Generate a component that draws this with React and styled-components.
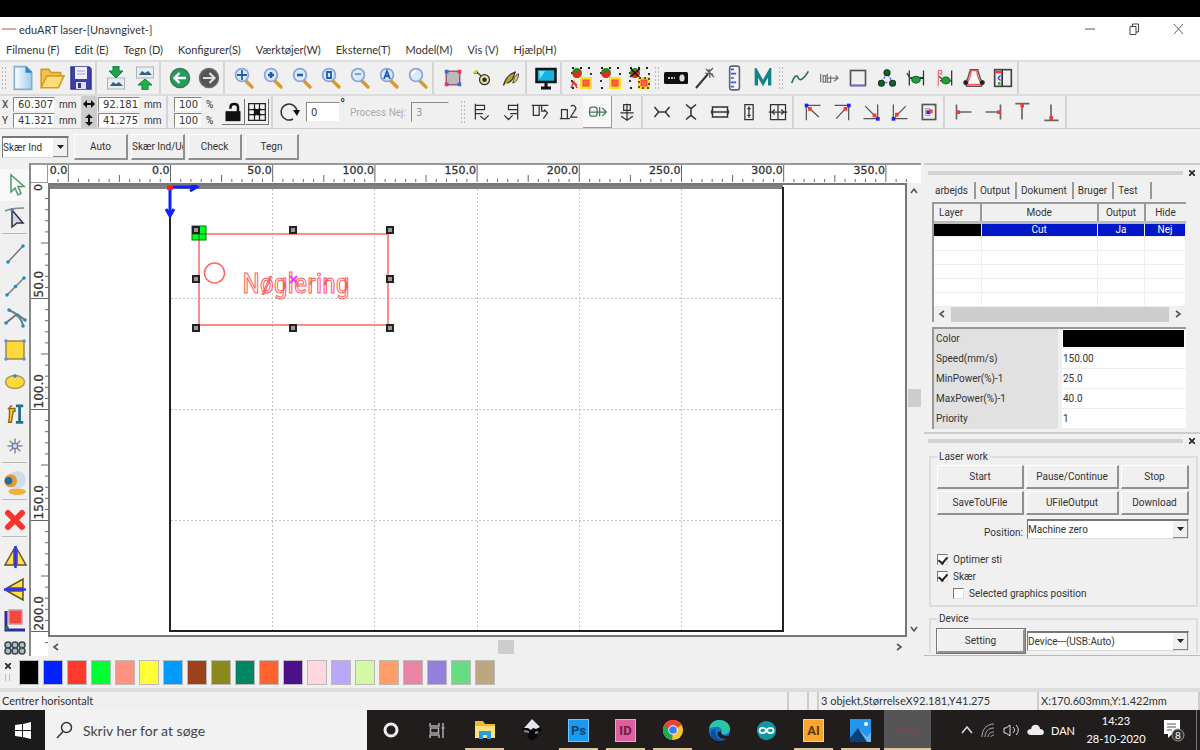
import React from 'react';
import styled, { createGlobalStyle } from 'styled-components';

const GlobalStyle = createGlobalStyle`
  * {
    box-sizing: border-box;
  }
  body {
    margin: 0;
    background: #f0f0f0;
    color: #333;
    font-family: Roboto, sans-serif;
    font-size: 10px;
    overflow: hidden;
  }
  button, input, select {
    font: inherit;
    color: inherit;
    margin: 0;
    padding: 0;
  }
  svg {
    display: block;
    flex: none;
  }
`;

const Desktop = styled.div`
  display: flex;
  flex-direction: column;
  height: 100vh;
  border-top: 17px solid #000;
`;

/* ---------- title and menu ---------- */

const TitleBar = styled.header`
  display: flex;
  align-items: center;
  height: 24px;
  flex: none;
  padding-left: 2px;
  background: #fff;
  font-family: Lato, sans-serif;
  font-size: 11px;
`;

const Logo = styled.span`
  width: 14px;
  height: 2px;
  margin-right: 3px;
  background: #e2a3a6;
`;

const WindowButtons = styled.div`
  display: flex;
  margin-left: auto;
`;

const WindowButton = styled.button`
  display: flex;
  align-items: center;
  justify-content: center;
  width: 44px;
  height: 22px;
  border: 0;
  background: none;
`;

const MenuBar = styled.nav`
  display: flex;
  align-items: center;
  gap: 15px;
  height: 19px;
  flex: none;
  padding: 0 0 2px 6px;
  background: #fff;
  font-family: Lato, sans-serif;
  font-size: 11px;
`;

const MenuLink = styled.a`
  color: #333;
  text-decoration: none;
`;

/* ---------- toolbars ---------- */

const Toolbar = styled.div`
  display: flex;
  flex: none;
  height: 34px;
  border-top: 2px solid #dcdcdc;
`;

const Grip = styled.span`
  width: 8px;
  margin: 4px 0;
  flex: none;
  background: radial-gradient(circle, #bbb 1px, transparent 1px) 0 0 / 4px 4px;
  background-clip: content-box;
  padding: 0 2px;
`;

const Divider = styled.span`
  width: 6px;
  flex: none;
  border-left: 2px solid #d4d4d4;
`;

const ToolButton = styled.button`
  display: flex;
  align-items: center;
  justify-content: center;
  width: 29px;
  flex: none;
  border: 0;
  background: ${props => (props.$raised ? '#f8f8f8' : 'none')};
  box-shadow: ${props => (props.$raised ? 'inset -1px -1px #999' : 'none')};
`;

const FieldGrid = styled.div`
  display: grid;
  grid-template-columns: ${props => props.$columns};
  grid-auto-rows: 16px;
  align-items: center;
  padding-left: 2px;
`;

const NumberField = styled.input`
  width: 100%;
  min-width: 0;
  height: ${props => props.$height || 15}px;
  padding-left: 4px;
  border: 1px solid #888;
  border-right-color: #eee;
  border-bottom-color: #eee;
  background: ${props => (props.disabled ? '#f0f0f0' : '#fff')};
  color: ${props => (props.disabled ? '#999' : '#333')};
  font-family: "DejaVu Sans", sans-serif;
  font-size: 10px;
`;

const Unit = styled.span`
  padding-left: 4px;
`;

const AxisBox = styled.span`
  display: flex;
  align-items: center;
  justify-content: center;
  align-self: stretch;
  margin: 0 1px 0 2px;
  background: #ccc;
`;

const LockButtons = styled.div`
  display: flex;
  align-items: center;
  gap: 1px;
  padding-right: 2px;
`;

const LockButton = styled.button`
  display: flex;
  align-items: center;
  justify-content: center;
  width: 23px;
  height: 26px;
  border: 0;
  border-right: 1px solid #777;
  border-bottom: 1px solid #777;
  background: #f0f0f0;
`;

const RotateGroup = styled.div`
  display: flex;
  align-items: center;
  padding-right: 10px;
  width: 182px;
`;

const RotateBox = styled.span`
  width: 34px;
  margin-left: 5px;
`;

const Degree = styled.span`
  width: 10px;
  align-self: flex-start;
  font-size: 14px;
`;

const ProcessLabel = styled.label`
  flex: 1;
  white-space: nowrap;
  color: #aaa;
`;

const ProcessBox = styled.span`
  width: 38px;
  margin-left: 4px;
`;

const ModeBar = styled.div`
  display: flex;
  align-items: center;
  gap: 3px;
  height: 35px;
  flex: none;
  padding: 2px 2px 0;
  border-top: 1px solid #ccc;
`;

const PushButton = styled.button`
  height: ${props => props.$height || 24}px;
  width: ${props => props.$width || 'auto'};
  overflow: hidden;
  white-space: nowrap;
  border: solid #fff;
  border-width: 1px 2px 2px 1px;
  border-right-color: #909090;
  border-bottom-color: #909090;
  background: #f0f0f0;
  outline: ${props => (props.$focused ? '1px solid #777' : 'none')};
`;

const SelectBox = styled.div`
  display: flex;
  width: ${props => props.$width || '100%'};
  height: ${props => props.$height || 20}px;
  margin-right: ${props => props.$right || 0}px;
  border: 1px solid #777;
  border-top-width: 2px;
  border-right-color: #ddd;
  border-bottom-color: #ddd;
  background: #fff;
`;

const SelectInput = styled.select`
  flex: 1;
  min-width: 0;
  appearance: none;
  border: 0;
  background: #fff;
`;

const SelectArrow = styled.span`
  display: flex;
  align-items: center;
  justify-content: center;
  width: 15px;
  border-right: 1px solid #888;
  border-bottom: 1px solid #888;
  background: #f0f0f0;
`;

/* ---------- work area ---------- */

const Main = styled.main`
  display: grid;
  grid-template-columns: 31px minmax(0, 1fr) 276px;
  flex: 1;
  min-height: 0;
`;

const SideTools = styled.div`
  display: flex;
  flex-direction: column;
  min-height: 0;
  overflow: hidden;
  padding-top: 6px;
  border-right: 2px solid #888;
`;

const SideButton = styled.button`
  display: flex;
  align-items: center;
  justify-content: center;
  height: 32px;
  flex: none;
  border: 0;
  background: ${props => (props.$active ? '#f8f8f8' : 'none')};
`;

const SideDivider = styled.span`
  height: 5px;
  flex: none;
  margin: 0 2px;
  border-top: 1px solid #bbb;
`;

const Stage = styled.section`
  display: grid;
  grid-template-columns: 17px minmax(0, 1fr) 14px;
  grid-template-rows: 18px minmax(0, 1fr) 19px;
  margin-right: 3px;
  border-top: 2px solid #999;
  background: #fff;
`;

const RulerTop = styled.svg`
  grid-column: 2 / 4;
  width: 100%;
  height: 18px;
`;

const RulerLeft = styled.svg`
  grid-column: 1;
  grid-row: 2 / 4;
  width: 17px;
  height: 100%;
`;

const RulerText = styled.text`
  font-family: "DejaVu Sans", sans-serif;
  font-size: ${props => props.$size}px;
  fill: #333;
  stroke: #333;
  stroke-width: 0.3;
`;

const Canvas = styled.div`
  min-height: 0;
  border: 2px solid #777;
  overflow: hidden;
`;

const CanvasDrawing = styled.svg`
  width: 100%;
  height: 100%;
`;

const KeyText = styled.text`
  font-family: "Roboto Condensed", Lato, sans-serif;
  font-size: 28px;
  fill: none;
  stroke: #ff5c5c;
`;

const Corner = styled.span`
  border-right: 1px solid #999;
  border-bottom: 1px solid #999;
`;

const ScrollTrack = styled.div`
  display: flex;
  flex-direction: ${props => (props.$vertical ? 'column' : 'row')};
  align-items: center;
  padding: ${props => (props.$vertical ? '4px 0' : '0 4px')};
  background: #f0f0f0;
`;

const ScrollSpace = styled.span`
  flex: ${props => props.$grow};
`;

const ScrollThumb = styled.span`
  width: ${props => props.$w};
  height: ${props => props.$h};
  flex: ${props => (props.$fill ? 1 : 'none')};
  margin: 0 ${props => (props.$fill ? 5 : 0)}px;
  background: #cdcdcd;
`;

/* ---------- right dock ---------- */

const Dock = styled.aside`
  display: flex;
  flex-direction: column;
  min-height: 0;
`;

const Panel = styled.section`
  flex: ${props => props.$flex};
  display: flex;
  flex-direction: column;
  min-height: 0;
  overflow: hidden;
  border-top: 2px solid #ccc;
  border-bottom: ${props => (props.$last ? '1px solid #bbb' : '0')};
`;

const PanelGrip = styled.div`
  display: flex;
  align-items: center;
  gap: 3px;
  height: 15px;
  flex: none;
  margin-bottom: ${props => props.$bottom || 0}px;
  padding: 0 2px 0 4px;
  &:before {
    content: '';
    flex: 1;
    height: 4px;
    background: #d3d3d3;
  }
`;

const CloseButton = styled.button`
  width: 12px;
  height: 12px;
  border: 0;
  background: none;
  display: flex;
  align-items: center;
  justify-content: center;
`;

const Tabs = styled.div`
  display: flex;
  align-items: center;
  height: 22px;
  padding: 2px 0 3px 8px;
`;

const Tab = styled.button`
  height: 17px;
  padding: 0 5px 0 3px;
  border: 0;
  border-right: 2px solid #999;
  background: none;
  ${props => props.$active && 'align-self: flex-start; padding-right: 6px;'}
  ${props => props.$last && 'padding-right: 13px;'}
  & + & {
    padding-left: 4px;
  }
`;

const ListFrame = styled.div`
  margin: 0 14px 5px 8px;
  border-top: 2px solid #999;
  border-left: 2px solid #999;
  background: #fff;
`;

const LayerTable = styled.table`
  width: 100%;
  table-layout: fixed;
  border-collapse: collapse;
  th {
    height: 18px;
    padding: 0;
    font-weight: 400;
    background: #f0f0f0;
    border-right: 2px solid #999;
    border-bottom: 3px solid #bbb;
  }
  td {
    height: 14px;
    padding: 0;
    text-align: center;
    border-right: 1px solid #eee;
    border-bottom: 1px solid #eee;
  }
  th:last-child {
    border-right: 0;
  }
  th:first-child {
    text-align: left;
    padding-left: 5px;
  }
`;

const LayerRow = styled.tr`
  line-height: 12px;
  color: ${props => (props.$selected ? '#fff' : '#333')};
  background: ${props => (props.$selected ? '#0018c8' : '#fff')};
  td:first-child {
    background: ${props => (props.$selected ? '#000' : '#fff')};
  }
`;

const PropertyTable = styled.table`
  width: 100%;
  border-collapse: collapse;
  th {
    width: 126px;
    height: 20px;
    padding: 0 0 0 2px;
    text-align: left;
    font-weight: 400;
    background: #e1e1e1;
    border-right: 4px solid #f0f0f0;
  }
  td {
    padding: 0 0 0 1px;
    border-bottom: 1px solid #eee;
    background: #fff;
  }
`;

const ColorBar = styled.span`
  display: block;
  height: 17px;
  margin-right: 2px;
  background: #000;
`;

const Group = styled.fieldset`
  margin: 0 2px 6px 5px;
  padding: 0 7px 0 6px;
  min-width: 0;
  border: 2px solid #ddd;
  ${props => props.$open && 'border-bottom: 0;'}
`;

const Legend = styled.legend`
  padding: 0 2px;
  line-height: 12px;
`;

const ButtonGrid = styled.div`
  display: grid;
  grid-template-columns: 87px 93px minmax(0, 1fr);
  gap: 2px;
  padding-top: 2px;
`;

const FormRow = styled.div`
  display: grid;
  grid-template-columns: 88px minmax(0, 1fr);
  gap: 2px;
  padding-top: 4px;
  align-items: center;
`;

const FormLabel = styled.label`
  text-align: right;
  padding: 8px 2px 0 0;
`;

const CheckList = styled.div`
  padding: 12px 0 3px;
`;

const CheckLabel = styled.label`
  display: flex;
  align-items: center;
  gap: 5px;
  height: 17px;
  margin-left: ${props => (props.$indent ? 16 : 0)}px;
`;

const CheckBox = styled.input`
  appearance: none;
  width: 11px;
  height: 11px;
  border: 1px solid #777;
  border-right-color: #ddd;
  border-bottom-color: #ddd;
  background: #fff;
  display: flex;
  justify-content: center;
  &:checked:after {
    content: '';
    width: 4px;
    height: 7px;
    border: solid #222;
    border-width: 0 2px 2px 0;
    transform: rotate(40deg);
  }
`;

/* ---------- palette, status, taskbar ---------- */

const Palette = styled.div`
  display: flex;
  align-items: center;
  gap: 4px;
  height: 33px;
  flex: none;
  border-bottom: 1px solid #ddd;
`;

const PaletteHandle = styled.div`
  width: 15px;
  display: flex;
  flex-direction: column;
  align-items: center;
  gap: 5px;
`;

const Swatch = styled.button`
  width: 20px;
  height: 25px;
  border: 1px solid #bbb;
  background: ${props => props.$color};
`;

const StatusBar = styled.footer`
  display: flex;
  height: 21px;
  flex: none;
  border-top: 3px solid #ddd;
  font-family: Lato, sans-serif;
  font-size: 11px;
  line-height: 17px;
`;

const StatusPane = styled.span`
  flex: ${props => (props.$width ? 'none' : 1)};
  width: ${props => props.$width || 'auto'};
  padding-left: 2px;
  white-space: nowrap;
  border-right: 2px solid #ccc;
`;

const Taskbar = styled.div`
  display: flex;
  height: 40px;
  flex: none;
  background: #211d1d;
  color: #fff;
`;

const StartButton = styled.button`
  display: flex;
  align-items: center;
  justify-content: center;
  width: 45px;
  border: 0;
  background: #1b1b1b;
`;

const Search = styled.label`
  display: flex;
  align-items: center;
  gap: 10px;
  width: 322px;
  padding-left: 11px;
  background: #f2f2f2;
  color: #444;
`;

const SearchInput = styled.input`
  flex: 1;
  min-width: 0;
  border: 0;
  background: none;
  font-family: Lato, sans-serif;
  font-size: 14px;
  &::placeholder {
    color: #444;
    opacity: 1;
  }
`;

const TaskButton = styled.button`
  display: flex;
  align-items: center;
  justify-content: center;
  width: 47px;
  flex: none;
  border: 0;
  background: ${props => (props.$active ? '#555' : 'none')};
  position: relative;
  &:after {
    content: '';
    position: absolute;
    bottom: 0;
    left: ${props => (props.$active ? 0 : 4)}px;
    right: ${props => (props.$active ? 0 : 4)}px;
    height: 2px;
    background: ${props => (props.$running ? '#dcc6a2' : 'transparent')};
  }
`;

const AppTile = styled.span`
  width: 21px;
  height: 23px;
  line-height: 21px;
  text-align: center;
  font-size: 13px;
  font-weight: 700;
  border: 1px solid ${props => props.$edge};
  background: ${props => props.$color};
  color: ${props => props.$ink};
`;

const Tray = styled.div`
  display: flex;
  align-items: center;
  gap: 7px;
  margin-left: auto;
  padding-right: 3px;
  font-family: Lato, sans-serif;
  font-size: 11px;
`;

const Clock = styled.time`
  width: 64px;
  margin: 0 8px 0 2px;
  text-align: center;
  white-space: nowrap;
  line-height: 18px;
`;

const ShowDesktop = styled.span`
  align-self: stretch;
  margin-left: 4px;
  border-left: 1px solid #777;
`;

/* ---------- icons ---------- */

const Svg = ({ size = 24, children }) => (
  <svg width={size} height={size} viewBox="0 0 24 24" fill="none" stroke="#333" strokeWidth="1.5">
    {children}
  </svg>
);

const Lens = ({ children }) => (
  <Svg>
    <path d="M14 15l6 6" stroke="#d99a2b" strokeWidth="3.4" strokeLinecap="round" />
    <circle cx="10" cy="9" r="6.4" fill="#dce9fb" stroke="#8da6da" strokeWidth="1.8" />
    <g stroke="#1d5fb4" strokeWidth="1.8">{children}</g>
  </Svg>
);

const Picture = ({ y }) => (
  <g>
    <rect x="3.500" y={y} width="17" height="11" fill="#e6eef2" stroke="#a9b4b8" strokeWidth="1" />
    <path d={`M6 ${y + 8}l3-4 3 2 3-2 4 4z`} fill="#345f80" stroke="none" />
  </g>
);

const Node = ({ x, y, color = '#1b8fc4' }) => (
  <circle cx={x} cy={y} r="1.8" fill={color} stroke="none" />
);

const Flower = ({ kind }) => (
  <Svg size={24}>
    <path d="M3 2h19v20H3z" stroke="#222" strokeWidth="1.8" strokeDasharray="2 6" />
    <circle cx="8" cy="7" r="5" fill="#2b8a22" stroke="none" />
    <circle cx="8" cy="8" r="4" fill="#e8281c" stroke="none" />
    <circle cx="7" cy="5" r="2" fill="#2b8a22" stroke="none" />
    {kind === 0 && <path d="M2 22l3-6 3 6M3 16l5 3" stroke="#e8281c" />}
    {kind === 2 && <path d="M3 11l10-8M4 3l9 9" stroke="#111" />}
    <rect x="11" y="11" width="12" height="12" fill="#ffe21c" stroke="none" />
    <rect x="14" y="14" width="6" height="6" fill="#ff6a2a" stroke="#f33a6a" strokeWidth="1" />
    {kind === 2 && <path d="M12 12h10v10H12z" stroke="#222" strokeDasharray="2 3" />}
  </Svg>
);

const Cross = () => (
  <svg width="6" height="6" viewBox="0 0 6 6" stroke="#222" strokeWidth="1.6">
    <path d="M0 0l6 6M6 0l-6 6" />
  </svg>
);

const Chevron = ({ turn = 0 }) => (
  <svg width="8" height="8" viewBox="0 0 8 8" fill="none" stroke="#555" strokeWidth="1.6">
    <path d="M1 6l3-4 3 4" transform={`rotate(${turn} 4 4)`} />
  </svg>
);

const DownArrow = () => (
  <svg width="7" height="4" viewBox="0 0 7 4">
    <path d="M0 0h7l-3.500 4z" fill="#222" />
  </svg>
);

const fileIcons = [
  ['New', <Svg size={26}><defs><linearGradient id="sheet"><stop offset="0" stopColor="#fff" /><stop offset="1" stopColor="#9dcdf0" /></linearGradient></defs><path d="M4 1.500h11l5 5v16H4z" fill="url(#sheet)" stroke="#86aecd" /><path d="M15 1.500v5h5" fill="#2d86c6" stroke="#2d86c6" /></Svg>],
  ['Open', <Svg size={26}><path d="M2 21V4h7l2 3h9v4" fill="#f5c24c" stroke="#d79a25" /><path d="M2 21L7 10h16l-5 11z" fill="#ffdc7a" stroke="#d79a25" /></Svg>],
  ['Save', <Svg size={24}><path d="M2 1h18l2 2v20H2z" fill="#3e40aa" stroke="#33358f" /><rect x="6" y="1" width="12" height="12" fill="#eef" stroke="none" /><path d="M8 5h8M8 8h8" stroke="#b9bad8" /><rect x="7" y="16" width="10" height="7" fill="#dfe0f2" stroke="none" /><rect x="9" y="17" width="3" height="5" fill="#33358f" stroke="none" /></Svg>],
];

const transferIcons = [
  ['Import', <Svg size={24}><Picture y={12} /><path d="M9 0h6v5h4l-7 7-7-7h4z" fill="#22a04c" stroke="#13803a" strokeWidth="1" /></Svg>],
  ['Export', <Svg size={24}><Picture y={1} /><path d="M9 24h6v-5h4l-7-6-7 6h4z" fill="#22b04c" stroke="#13803a" strokeWidth="1" /></Svg>],
];

const historyIcons = [
  ['Undo', <Svg><circle cx="12" cy="12" r="9.500" fill="#1fa05a" stroke="#45725a" /><path d="M18 12H7M11.500 7l-5 5 5 5" stroke="#fff" strokeWidth="2.4" /></Svg>],
  ['Redo', <Svg><circle cx="12" cy="12" r="9.500" fill="#555" stroke="#6b6b6b" /><path d="M6 12h11M12.500 7l5 5-5 5" stroke="#ddd" strokeWidth="2.2" /></Svg>],
];

const zoomIcons = [
  ['Pan', <Lens><path d="M10 4v10M5 9h10" /></Lens>],
  ['Zoom in', <Lens><path d="M10 6v6M7 9h6" strokeWidth="2.600" /></Lens>],
  ['Zoom out', <Lens><path d="M7 9h6" strokeWidth="2.600" /></Lens>],
  ['Zoom page', <Lens><path d="M8 6h4v6H8z" /></Lens>],
  ['Zoom data', <Lens><path d="M7 8h6" strokeWidth="1" /></Lens>],
  ['Zoom all', <Lens><path d="M7 13l3-8 3 8M8 10h4" /></Lens>],
  ['Zoom box', <Lens><path d="M6 9a4 4 0 0 1 4-4" stroke="#fff" /></Lens>],
];

const editIcons = [
  ['Bounds', <Svg size={18}><rect x="3" y="3" width="18" height="18" fill="#bbb" stroke="#9a5a7a" strokeWidth="2" /><path d="M1 1h5v5H1zM18 18h5v5h-5z" fill="#46d" stroke="none" /><path d="M18 1h5v5h-5zM1 18h5v5H1z" fill="#e35" stroke="none" /></Svg>],
  ['Cut start', <Svg size={20}><path d="M2 6h5l6 5M7 6l-2-3" /><circle cx="15" cy="14" r="6" fill="#e8e0a0" /><circle cx="15" cy="14" r="2" fill="#222" /><path d="M2 5h4" stroke="#e8d400" strokeWidth="3" /></Svg>],
  ['Cut order', <Svg size={20}><path d="M3 21c2-9 6-13 14-16-2 7-4 12-10 13" fill="#b6a822" /><path d="M14 18c5-1 7-6 7-11-3 1-5 4-7 11z" fill="#d8cf62" strokeWidth="1" /></Svg>],
];

const previewIcons = [
  ['Preview', <Svg size={24}><rect x="2.500" y="3" width="19" height="13" fill="#16b4dc" stroke="#111" strokeWidth="2.500" /><path d="M7 22h10M12 17v4" stroke="#111" strokeWidth="3" /><path d="M5 5l6 0-5 8z" fill="#7fe0f4" stroke="none" /></Svg>],
];

const flowerIcons = [
  ['Select all', <Flower kind={0} />],
  ['Group', <Flower kind={1} />],
  ['Ungroup', <Flower kind={2} />],
];

const deviceIcons = [
  ['Rotary', <Svg size={24}><rect x="0" y="6" width="24" height="12" rx="1.500" fill="#111" stroke="none" /><ellipse cx="18" cy="12" rx="2.600" ry="3.600" fill="#ddd" stroke="none" /><path d="M4 12h7" stroke="#fff" strokeDasharray="2 1" /></Svg>],
  ['Wand', <Svg><path d="M3 22L15 8" stroke="#333" strokeWidth="2" /><path d="M12 7l8 1M16 3l1 9M13 3l8 8M20 2l-4 4" stroke="#555" strokeWidth="1.200" /></Svg>],
  ['Ruler', <Svg size={26}><rect x="8" y="1" width="9" height="22" rx="2" fill="#f4f4ff" stroke="#666" /><path d="M9 4h3M9 8h5M9 12h3M9 16h5M9 20h3" stroke="#4654e8" /></Svg>],
  ['Model', <Svg size={20}><path d="M4 21V4l8 14 8-14v17" stroke="#138387" strokeWidth="4" /></Svg>],
];

const pathIcons = [
  ['Smooth curve', <Svg size={20}><path d="M2 18c4-10 6-10 8-6s6 2 12-8" stroke="#276b6b" strokeWidth="2" /></Svg>],
  ['Bitmap', <Svg size={20}><path d="M2 7v10M5 9h3v8H5zM10 7v10h4V9M10 12h12M20 9l3 3-5 4" stroke="#777" /></Svg>],
  ['Frame', <Svg size={20}><rect x="3" y="3" width="18" height="18" stroke="#555" strokeWidth="2" /><path d="M3 21h18" stroke="#66f" strokeWidth="2" /></Svg>],
  ['Nodes', <Svg size={18}><path d="M12 6L4 18h16z" stroke="#66f" strokeDasharray="3 2" strokeWidth="2" /><g fill="#12652a" stroke="#103a1c"><circle cx="12" cy="5" r="4" /><circle cx="4.500" cy="19" r="4" /><circle cx="19.500" cy="19" r="4" /></g></Svg>],
  ['Distance', <Svg size={20}><path d="M4 3v18M21 3v18M1 6l3 5" /><path d="M5 12h16" strokeWidth="2.500" /><ellipse cx="12" cy="14" rx="5" ry="4" fill="#2a9b36" stroke="#173" /></Svg>],
  ['Align cut', <Svg size={20}><path d="M4 2v20M4 3h4v4H4" stroke="#e77" /><path d="M20 3v18M5 10l4 4M6 15h14" /><ellipse cx="13" cy="15" rx="5" ry="4" fill="#1fa12c" stroke="#173" /></Svg>],
  ['Offset', <Svg size={22}><path d="M8 3h8l3 10 3 4-2 4H4l-2-4 3-4z" stroke="#555" /><path d="M9 4h6l1 6 4 9H4l4-9z" fill="#fff" stroke="#f55" /><circle cx="3" cy="17" r="2" fill="#111" /><circle cx="21" cy="17" r="2" fill="#111" /></Svg>],
  ['Properties', <Svg size={20}><rect x="2" y="2" width="20" height="20" stroke="#444" strokeWidth="2" /><path d="M11 2v20" strokeWidth="2" /><path d="M3 5h8" stroke="#f33" strokeWidth="3" /><path d="M6 12l3-3M6 12l3 3" stroke="#33f" /><path d="M6 17h3v3H6z" fill="#1b1" stroke="none" /></Svg>],
];

const arrangeIcons = [
  ['Align left', <Svg size={20}><path d="M4 2v19M4 4h11v5H4M4 14h9M10 17l5 4 5-5" /></Svg>],
  ['Align right', <Svg size={20}><path d="M20 2v19M20 4H9v5h11M20 14h-9M4 16l5 5 5-5" /></Svg>],
  ['Align top', <Svg size={20}><path d="M2 4h20M4 4v12h7V4M14 4v7h4M17 9l4 4-5 7" /></Svg>],
  ['Align bottom', <Svg size={20}><path d="M1 20h12M3 20V9h7v11M14 5c4-3 8 2 5 5l-5 8h8" /></Svg>],
  ['Centrer horisontalt', <Svg size={20}><g stroke="#3d7a55"><rect x="2" y="6" width="9" height="11" rx="3" /><path d="M1 12h21M14 6v11M17 7l5 5-5 5" /></g></Svg>],
  ['Center vertical', <Svg size={20}><path d="M12 2v20M8 3h8v7H8zM4 13h16M5 17l7 5 7-5" /></Svg>],
];

const spacingIcons = [
  ['Same gap across', <Svg size={20}><path d="M3 6l5 6-5 6M21 6l-5 6 5 6M8 12h8" strokeWidth="1.800" /></Svg>],
  ['Same gap down', <Svg size={20}><path d="M6 3l6 5 6-5M6 21l6-5 6 5M12 8v8" strokeWidth="1.800" /></Svg>],
  ['Same width', <Svg size={20}><path d="M3 6h18v12H3zM3 12h18M2 10v4M22 10v4" strokeWidth="1.800" /></Svg>],
  ['Same height', <Svg size={20}><path d="M7 3h10v18H7zM12 5v14M10 8h4M10 16h4" /></Svg>],
  ['Same size', <Svg size={20}><path d="M3 3h18v18H3zM1 12h22M12 3v18" /><path d="M8 9l-3 3 3 3M16 9l3 3-3 3" /></Svg>],
];

const Spot = ({ x, y, color }) => <rect x={x - 2} y={y - 2} width="4.400" height="4.400" fill={color} stroke="none" />;

const moveIcons = [
  ['Top left', <Svg size={20}><path d="M4 22V4h17M7 7l12 11" stroke="#555" /><Spot x={4} y={4} color="#22f" /><Spot x={8} y={8} color="#f33" /></Svg>],
  ['Top right', <Svg size={20}><path d="M3 4h17v18M17 7L5 20" stroke="#555" /><Spot x={20} y={4} color="#22f" /><Spot x={16} y={8} color="#f33" /></Svg>],
  ['Bottom right', <Svg size={20}><path d="M20 3v17H3M5 5l13 13" stroke="#555" /><Spot x={20} y={20} color="#22f" /><Spot x={16} y={16} color="#f33" /></Svg>],
  ['Bottom left', <Svg size={20}><path d="M4 3v17h17M19 5L6 18" stroke="#555" /><Spot x={4} y={20} color="#22f" /><Spot x={8} y={15} color="#f33" /></Svg>],
  ['Page center', <Svg size={20}><rect x="4" y="3" width="16" height="18" stroke="#555" strokeWidth="2" /><path d="M8 8h5v8H8zM16 3l4 4" stroke="#888" strokeWidth="1" /><Spot x={11} y={12} color="#22f" /><Spot x={14} y={11} color="#f33" /></Svg>],
];

const edgeIcons = [
  ['Left edge', <Svg size={20}><path d="M3 3v18M3 12h18" stroke="#666" strokeWidth="2" /><Spot x={5} y={12} color="#f33" /></Svg>],
  ['Right edge', <Svg size={20}><path d="M21 3v18M3 12h18" stroke="#666" strokeWidth="2" /><Spot x={19} y={12} color="#f33" /></Svg>],
  ['Top edge', <Svg size={20}><path d="M4 2h17M12 2v19" stroke="#666" strokeWidth="2" /><Spot x={12} y={4} color="#f33" /></Svg>],
  ['Bottom edge', <Svg size={20}><path d="M4 22h17M12 3v19" stroke="#666" strokeWidth="2" /><Spot x={12} y={19} color="#f33" /></Svg>],
];

const sideIcons = [
  [
    ['Select', <Svg><path d="M8 2v17l4-4 3 7 3-1.500-3-7h6z" fill="#fff" stroke="#4c9a68" /></Svg>],
    ['Edit nodes', <Svg><path d="M2 6c6-3 12-3 19-3" stroke="#888" /><path d="M9 5v17l5-4h6z" fill="#cdd6ee" stroke="#333" /><Node x={9} y={5} color="#4a7fd0" /></Svg>],
  ],
  [
    ['Line', <Svg><path d="M5 20L20 4" stroke="#777" /><Node x={5} y={20} /><Node x={20} y={4} /></Svg>],
    ['Polyline', <Svg><path d="M4 21L21 4" stroke="#777" /><Node x={4} y={21} /><Node x={12.5} y={12.5} /><Node x={21} y={4} /></Svg>],
    ['Curve', <Svg><path d="M3 17L14 8M6 4c7 3 12 7 14 15M14 8l8 6" stroke="#777" strokeWidth="2" /><Node x={3} y={17} /><Node x={6} y={4} /><Node x={14} y={9} /><Node x={22} y={14} /><Node x={20} y={20} /></Svg>],
    ['Rectangle', <Svg><rect x="3" y="3" width="18" height="18" fill="#ffd93b" stroke="#9a8a4a" /><Node x={3} y={3} color="#5b8fe0" /><Node x={21} y={3} color="#5b8fe0" /><Node x={3} y={21} color="#5b8fe0" /><Node x={21} y={21} color="#5b8fe0" /></Svg>],
    ['Ellipse', <Svg><ellipse cx="12" cy="12" rx="9.500" ry="6.500" fill="#ffd93b" stroke="#b39a55" /><Node x={12} y={6} /></Svg>],
    ['Text', <Svg size={22}><path d="M9 3c-4 0-3 4-3 8s0 6-1 10h3l2-12h2V6H4" fill="#ffc933" stroke="#8a6a1a" /><path d="M13 3h8M13 21h8M17 3v18" stroke="#1f6f92" strokeWidth="3" /></Svg>],
    ['Point', <Svg size={18}><path d="M12 2v20M2 12h20M5 5l14 14M19 5L5 19" stroke="#888" strokeWidth="2" /><circle cx="12" cy="12" r="3.500" fill="#d5e3ff" stroke="#5a7bc0" /></Svg>],
  ],
  [
    ['Capture', <Svg size={26}><circle cx="14" cy="9" r="8" fill="#cfdde8" stroke="none" /><ellipse cx="14" cy="20" rx="8" ry="3" fill="#f0b040" stroke="none" /><circle cx="8" cy="10" r="6" fill="#e8963a" stroke="none" /><circle cx="6" cy="10" r="3.500" fill="#1d6fa5" stroke="none" /></Svg>],
  ],
  [
    ['Delete', <Svg><path d="M5 5l14 14M19 5L5 19" stroke="#f5352b" strokeWidth="6" strokeLinecap="round" /></Svg>],
  ],
  [
    ['Mirror horizontal', <Svg><path d="M11 4v16H2zM14 4v16h9z" fill="#ffe04a" stroke="#5f561c" /><path d="M12.500 1v22" stroke="#2b2bff" strokeWidth="2.500" /></Svg>],
    ['Mirror vertical', <Svg><path d="M20 11H4l16-9zM20 14H4l16 9z" fill="#ffe04a" stroke="#5f561c" /><path d="M1 12.500h22" stroke="#2b2bff" strokeWidth="2.500" /></Svg>],
    ['Place', <Svg><rect x="6" y="1" width="13" height="14" fill="#f5483c" stroke="#c9a" /><path d="M3 2v19h19" stroke="#332a9a" strokeWidth="3" /><circle cx="4" cy="19" r="2" fill="#175" stroke="none" /></Svg>],
    ['Array', <Svg><g stroke="#444" fill="#9fc3d6"><circle cx="5" cy="4" r="3" /><circle cx="12" cy="4" r="3" /><circle cx="19" cy="4" r="3" /><circle cx="5" cy="10" r="3" /><circle cx="12" cy="10" r="3" /><circle cx="19" cy="10" r="3" /></g></Svg>],
  ],
];

const ToolGroup = ({ icons, raised }) =>
  icons.map(([name, icon]) => (
    <ToolButton key={name} aria-label={name} $raised={raised === name}>{icon}</ToolButton>
  ));

const Select = ({ label, value, ...rest }) => (
  <SelectBox {...rest}>
    <SelectInput id={label} aria-label={label} defaultValue={value}>
      <option>{value}</option>
    </SelectInput>
    <SelectArrow><DownArrow /></SelectArrow>
  </SelectBox>
);

/* ---------- work area drawing ---------- */

const STEP_X = 10.22;
const STEP_Y = 11.1;

const topTicks = Array.from({ length: 84 }, (_, i) => i - 11);
const leftTicks = Array.from({ length: 41 }, (_, i) => i + 1);
const tickLength = i => (i % 10 === 0 ? 17 : i % 5 === 0 ? 7 : 3);

const HorizontalRuler = () => (
  <RulerTop>
    {topTicks.map(i => {
      const x = 122.5 + i * STEP_X;
      return (
        <g key={i}>
          <path d={`M${x} ${17 - tickLength(i)}V17`} stroke="#666" />
          {i % 10 === 0 && (
            <RulerText $size={11} x={x - 1} y="9" textAnchor="end">
              {i === -10 ? '0.0' : `${i * 5}.0`}
            </RulerText>
          )}
        </g>
      );
    })}
  </RulerTop>
);

const VerticalRuler = () => (
  <RulerLeft>
    <RulerText $size={11} transform="translate(11 8) rotate(-90)">0</RulerText>
    {leftTicks.map(i => {
      const y = 4.5 + i * STEP_Y;
      return (
        <g key={i}>
          <path d={`M${17 - tickLength(i)} ${y}H17`} stroke="#666" />
          {i % 10 === 0 && (
            <RulerText $size={12} transform={`translate(12 ${y - 1}) rotate(-90)`}>{`${i * 5}.0`}</RulerText>
          )}
        </g>
      );
    })}
  </RulerLeft>
);

const handles = [[26, 43], [123, 43], [220, 43], [26, 92], [220, 92], [26, 141], [123, 141], [220, 141]];

const Drawing = () => (
  <CanvasDrawing fill="none">
    <path d="M0 2H733" stroke="#808080" strokeWidth="4" />
    <g transform="translate(120 2)">
      <path d="M0 0V444H613V0" stroke="#222" strokeWidth="2" />
      <g stroke="#c4c4bc" strokeDasharray="2 2">
        {[1, 2, 3, 4, 5].map(i => <path key={i} d={`M${Math.round(i * 102.2) + 0.5} 2V443`} />)}
        {[1, 2, 3].map(i => <path key={i} d={`M1 ${i * 111 + 0.5}H612`} />)}
      </g>
      <path d="M0 0H26M20 -4l7 4-7 4" stroke="#1020ff" strokeWidth="3" />
      <path d="M0 0V27M-4 22l4 7 4-7" stroke="#1020ff" strokeWidth="3" />
      <rect x="-3" y="-3" width="6" height="6" fill="#f22" />
      <g stroke="#ff6464" strokeWidth="1.500">
        <rect x="29" y="47" width="189" height="91" />
        <circle cx="44.500" cy="86" r="10" />
      </g>
      <KeyText x="126" y="106" textAnchor="middle">Nøglering</KeyText>
      <path d="M120 89l7 7M127 89l-7 7" stroke="#f3f" strokeWidth="2" />
      <rect x="22" y="39" width="14" height="14" fill="#0f2" stroke="#070" />
      <path d="M29 39v14M22 47h14" stroke="#262" />
      {handles.map(([x, y]) => (
        <rect key={`${x}-${y}`} x={x - 3} y={y - 3} width="6" height="6" fill="#999" stroke="#222" strokeWidth="2" />
      ))}
    </g>
  </CanvasDrawing>
);

const menus = ['Filmenu (F)', 'Edit (E)', 'Tegn (D)', 'Konfigurer(S)', 'Værktøjer(W)', 'Eksterne(T)', 'Model(M)', 'Vis (V)', 'Hjælp(H)'];

const properties = [
  ['Speed(mm/s)', '150.00'],
  ['MinPower(%)-1', '25.0'],
  ['MaxPower(%)-1', '40.0'],
  ['Priority', '1'],
];

const colors = [
  '#000000', '#0022ff', '#ff392b', '#00ff33', '#ff9282', '#ffff38', '#009bff', '#9c411b', '#89891d', '#008665',
  '#ff6430', '#4a1188', '#ffd7df', '#b9a8f7', '#d4f8a5', '#ff9e69', '#e984a5', '#9480dc', '#67dc83', '#bca780',
];

const App = () => (
  <Desktop>
    <GlobalStyle />
    <TitleBar>
      <Logo />
      eduART laser-[Unavngivet-]
      <WindowButtons>
        <WindowButton aria-label="Minimize"><svg width="10" height="2"><path d="M0 1h10" stroke="#555" /></svg></WindowButton>
        <WindowButton aria-label="Restore"><svg width="11" height="12" fill="none" stroke="#444"><path d="M1 3.500h6v8H1zM3.500 3V1h6v8H7" /></svg></WindowButton>
        <WindowButton aria-label="Close"><svg width="11" height="12" stroke="#666"><path d="M1 1l9 10M10 1L1 11" /></svg></WindowButton>
      </WindowButtons>
    </TitleBar>
    <MenuBar>
      {menus.map(name => <MenuLink key={name} href="#">{name}</MenuLink>)}
    </MenuBar>

    <Toolbar>
      <Grip />
      <ToolGroup icons={fileIcons} />
      <Divider />
      <ToolGroup icons={transferIcons} />
      <Divider />
      <ToolGroup icons={historyIcons} />
      <Divider />
      <ToolGroup icons={zoomIcons} />
      <Divider />
      <ToolGroup icons={editIcons} />
      <Divider />
      <ToolGroup icons={previewIcons} />
      <Divider />
      <ToolGroup icons={flowerIcons} />
      <Grip />
      <ToolGroup icons={deviceIcons} />
      <Grip />
      <ToolGroup icons={pathIcons} />
      <Divider />
    </Toolbar>

    <Toolbar>
      <FieldGrid $columns="11px 42px 22px">
        <label htmlFor="x">X</label>
        <NumberField id="x" defaultValue="60.307" />
        <Unit>mm</Unit>
        <label htmlFor="y">Y</label>
        <NumberField id="y" defaultValue="41.321" />
        <Unit>mm</Unit>
      </FieldGrid>
      <FieldGrid $columns="19px 42px 26px">
        <AxisBox><svg width="12" height="8"><path d="M0 4l4-4v3h4V0l4 4-4 4V5H4v3z" fill="#111" /></svg></AxisBox>
        <NumberField aria-label="Width" defaultValue="92.181" />
        <Unit>mm</Unit>
        <AxisBox><svg width="8" height="12"><path d="M4 0l4 4H5v4h3l-4 4-4-4h3V4H0z" fill="#111" /></svg></AxisBox>
        <NumberField aria-label="Height" defaultValue="41.275" />
        <Unit>mm</Unit>
      </FieldGrid>
      <Divider />
      <FieldGrid $columns="28px 20px">
        <NumberField aria-label="Width percent" defaultValue="100" />
        <Unit>%</Unit>
        <NumberField aria-label="Height percent" defaultValue="100" />
        <Unit>%</Unit>
      </FieldGrid>
      <LockButtons>
        <LockButton aria-label="Lock ratio"><Svg size={20}><path d="M3 11h18v12H3z" fill="#111" stroke="none" /><path d="M9 8V6c0-5 9-5 9 0v6" stroke="#111" strokeWidth="3" /></Svg></LockButton>
        <LockButton aria-label="Anchor"><Svg size={20}><path d="M2 2h20v20H2zM2 9h20M2 15h20M9 2v20M15 2v20" stroke="#222" /><path d="M8 8l8 8M16 8l-8 8" strokeWidth="3" stroke="#111" /></Svg></LockButton>
      </LockButtons>
      <Divider />
      <RotateGroup>
        <Svg><path d="M16 19a8 8 0 1 1 4-7" /><path d="M16 10h7l-3 6z" fill="#111" stroke="none" /></Svg>
        <RotateBox><NumberField aria-label="Angle" defaultValue="0" $height={20} /></RotateBox>
        <Degree>°</Degree>
        <ProcessLabel htmlFor="process">Process Nej:</ProcessLabel>
        <ProcessBox><NumberField id="process" defaultValue="3" disabled $height={20} /></ProcessBox>
      </RotateGroup>
      <Grip />
      <ToolGroup icons={arrangeIcons} raised="Centrer horisontalt" />
      <Divider />
      <ToolGroup icons={spacingIcons} />
      <Divider />
      <ToolGroup icons={moveIcons} />
      <Divider />
      <ToolGroup icons={edgeIcons} />
      <Divider />
    </Toolbar>

    <ModeBar>
      <Select label="Mode" value="Skær Ind" $width="67px" $height={22} $right={2} />
      <PushButton $width="54px" $height={26}>Auto</PushButton>
      <PushButton $width="54px" $height={26}>Skær Ind/Ud</PushButton>
      <PushButton $width="54px" $height={26}>Check</PushButton>
      <PushButton $width="54px" $height={26}>Tegn</PushButton>
    </ModeBar>

    <Main>
      <SideTools>
        {sideIcons.map((group, i) => (
          <React.Fragment key={i}>
            {i > 0 && <SideDivider />}
            {group.map(([name, icon]) => (
              <SideButton key={name} aria-label={name} $active={name === 'Select'}>{icon}</SideButton>
            ))}
          </React.Fragment>
        ))}
      </SideTools>

      <Stage>
        <Corner />
        <HorizontalRuler />
        <VerticalRuler />
        <Canvas><Drawing /></Canvas>
        <ScrollTrack $vertical>
          <Chevron />
          <ScrollSpace $grow={47} />
          <ScrollThumb $w="13px" $h="18px" />
          <ScrollSpace $grow={53} />
          <Chevron turn={180} />
        </ScrollTrack>
        <ScrollTrack>
          <Chevron turn={-90} />
          <ScrollSpace $grow={53} />
          <ScrollThumb $w="16px" $h="14px" />
          <ScrollSpace $grow={46} />
          <Chevron turn={90} />
        </ScrollTrack>
        <ScrollTrack />
      </Stage>

      <Dock>
        <Panel $flex="270 1 0">
          <PanelGrip><CloseButton aria-label="Close layers"><Cross /></CloseButton></PanelGrip>
          <Tabs>
            <Tab $active>arbejds</Tab>
            <Tab>Output</Tab>
            <Tab>Dokument</Tab>
            <Tab>Bruger</Tab>
            <Tab $last>Test</Tab>
          </Tabs>
          <ListFrame>
            <LayerTable>
              <colgroup>
                <col width="47" />
                <col />
                <col width="47" />
                <col width="41" />
              </colgroup>
              <thead>
                <tr><th>Layer</th><th>Mode</th><th>Output</th><th>Hide</th></tr>
              </thead>
              <tbody>
                <LayerRow $selected><td /><td>Cut</td><td>Ja</td><td>Nej</td></LayerRow>
                {[1, 2, 3, 4, 5].map(i => <LayerRow key={i}><td /><td /><td /><td /></LayerRow>)}
              </tbody>
            </LayerTable>
            <ScrollTrack>
              <Chevron turn={-90} />
              <ScrollThumb $fill $h="15px" />
              <Chevron turn={90} />
            </ScrollTrack>
          </ListFrame>
          <ListFrame>
            <PropertyTable>
              <tbody>
                <tr><th>Color</th><td><ColorBar /></td></tr>
                {properties.map(([name, value]) => (
                  <tr key={name}><th>{name}</th><td>{value}</td></tr>
                ))}
              </tbody>
            </PropertyTable>
          </ListFrame>
        </Panel>
        <Panel $flex="224 1 0" $last>
          <PanelGrip $bottom={2}><CloseButton aria-label="Close laser work"><Cross /></CloseButton></PanelGrip>
          <Group>
            <Legend>Laser work</Legend>
            <ButtonGrid>
              <PushButton>Start</PushButton>
              <PushButton>Pause/Continue</PushButton>
              <PushButton>Stop</PushButton>
              <PushButton>SaveToUFile</PushButton>
              <PushButton>UFileOutput</PushButton>
              <PushButton>Download</PushButton>
            </ButtonGrid>
            <FormRow>
              <FormLabel htmlFor="Position">Position:</FormLabel>
              <Select label="Position" value="Machine zero" />
            </FormRow>
            <CheckList>
              <CheckLabel><CheckBox type="checkbox" defaultChecked />Optimer sti</CheckLabel>
              <CheckLabel><CheckBox type="checkbox" defaultChecked />Skær</CheckLabel>
              <CheckLabel $indent><CheckBox type="checkbox" />Selected graphics position</CheckLabel>
            </CheckList>
          </Group>
          <Group $open>
            <Legend>Device</Legend>
            <FormRow>
              <PushButton $focused>Setting</PushButton>
              <Select label="Device" value="Device---(USB:Auto)" />
            </FormRow>
          </Group>
        </Panel>
      </Dock>
    </Main>

    <Palette>
      <PaletteHandle>
        <Cross />
        <svg width="5" height="8" fill="none" stroke="#bbb"><path d="M.5 0v7M4.500 0v7" /></svg>
      </PaletteHandle>
      {colors.map(color => <Swatch key={color} $color={color} aria-label={color} />)}
    </Palette>

    <StatusBar>
      <StatusPane>Centrer horisontalt</StatusPane>
      <StatusPane $width="20px" />
      <StatusPane $width="10px" />
      <StatusPane $width="220px">3 objekt,StørrelseX92.181,Y41.275</StatusPane>
      <StatusPane $width="161px">X:170.603mm,Y:1.422mm</StatusPane>
    </StatusBar>

    <Taskbar>
      <StartButton aria-label="Start">
        <svg width="16" height="17" viewBox="0 0 16 17" fill="#fff"><path d="M0 3l7-1v6H0zM8 2l8-2v8H8zM0 9h7v6l-7-1zM8 9h8v8l-8-2z" /></svg>
      </StartButton>
      <Search>
        <svg width="17" height="18" viewBox="0 0 17 18" fill="none" stroke="#333" strokeWidth="1.500"><circle cx="10.500" cy="6.500" r="5" /><path d="M7 10.500L1 17" /></svg>
        <SearchInput aria-label="Search" placeholder="Skriv her for at søge" />
      </Search>
      <TaskButton aria-label="Cortana"><svg width="18" height="18" fill="none" stroke="#eee" strokeWidth="3"><circle cx="9" cy="9" r="6" /></svg></TaskButton>
      <TaskButton aria-label="Task view"><svg width="17" height="17" fill="none" stroke="#aaa" strokeWidth="1.500"><path d="M1 1v3h9V1M1 16v-3h9v3M1.500 6h8v5h-8zM14 1v15M12.500 6h3" /></svg></TaskButton>
      <TaskButton aria-label="Explorer" $running><svg width="22" height="20"><path d="M1 1h8l2 3h10v14H1z" fill="#f9b52b" /><path d="M1 6h20v12H1z" fill="#ffe07a" /><path d="M5 19v-8h12v8h-4v-4H9v4z" fill="#2a9bdc" /></svg></TaskButton>
      <TaskButton aria-label="Inkscape"><svg width="22" height="24"><path d="M11 1l9 9c2 3-3 4-5 5l2 3-6 5-5-4 2-4c-4-1-8-3-6-5z" fill="#0a0a0a" /><path d="M11 1l8 8-4 2-3-1-2 2-3-2-4 0z" fill="#e4e4f0" /><path d="M3 13l5 1M14 15l3-1" stroke="#888" strokeWidth="2" /></svg></TaskButton>
      <TaskButton $running><AppTile $color="#1a9bf0" $edge="#71c6ff" $ink="#0b4472">Ps</AppTile></TaskButton>
      <TaskButton $running><AppTile $color="#dc5fa0" $edge="#f3a2ca" $ink="#6d1c48">ID</AppTile></TaskButton>
      <TaskButton aria-label="Chrome" $running>
        <svg width="22" height="24" viewBox="0 0 24 24"><circle cx="12" cy="12" r="11" fill="#f9c52d" /><path d="M12 12L2.500 6.500A11 11 0 0 1 21.500 6.500z" fill="#e5453a" /><path d="M12 12L2.500 6.500A11 11 0 0 0 11 23z" fill="#25a452" /><path d="M12 6.500h9.500A11 11 0 0 0 2.500 6.500L7 12z" fill="#e5453a" /><circle cx="12" cy="12" r="5.200" fill="#fff" /><circle cx="12" cy="12" r="4.200" fill="#3c7cf0" /></svg>
      </TaskButton>
      <TaskButton aria-label="Edge">
        <svg width="23" height="25" viewBox="0 0 24 24"><circle cx="12" cy="12" r="11" fill="#1378cc" /><path d="M1 11C2 3 7 1 12 1c7 0 11 5 11 9s-3 6-6 6c-2 0-4-1-3-3 1-3-2-5-5-5-4 0-7 1-8 3z" fill="#29c6a8" /><path d="M9 10c-3 5 0 11 7 12-8 3-14-3-13-8 1-3 3-4 6-4z" fill="#0d4e9e" /><path d="M14 12c-2 3 2 7 8 5l-2 3c-5 2-11-1-10-6z" fill="#211d1d" /></svg>
      </TaskButton>
      <TaskButton aria-label="Arduino">
        <svg width="21" height="23" viewBox="0 0 24 24" fill="none"><circle cx="12" cy="12" r="11" fill="#12979c" /><path d="M12 12c-2-4-8-4-8 0s6 4 8 0 8-4 8 0-6 4-8 0" stroke="#fff" strokeWidth="2" /></svg>
      </TaskButton>
      <TaskButton $running><AppTile $color="#f9a62c" $edge="#ffd07a" $ink="#5c3a08">AI</AppTile></TaskButton>
      <TaskButton aria-label="Photos" $running>
        <svg width="21" height="23"><path d="M0 0h21v23H0z" fill="#2196f0" /><path d="M0 19l8-10 13 14H0z" fill="#0e3f78" /><path d="M8 9l9 9 4-5v10h-4z" fill="#6cb6f2" /><circle cx="16" cy="5" r="2" fill="#fff" /></svg>
      </TaskButton>
      <TaskButton aria-label="eduART laser" $running $active><svg width="22" height="2"><path d="M0 1h22" stroke="#a43a3c" /></svg></TaskButton>
      <Tray>
        <svg width="12" height="8" fill="none" stroke="#ddd" strokeWidth="1.500"><path d="M1 7l5-6 5 6" /></svg>
        <svg width="16" height="16" fill="none" stroke="#aaa"><path d="M2 15C2 7 7 2 14 2M5 15c0-5 3-9 9-9M8 15c0-3 2-5 6-5M11 15c0-1 1-2 3-2" /></svg>
        <svg width="17" height="14" fill="none" stroke="#ddd"><path d="M1 5v5h2l4 3V2L3 5zM10 4c2 2 2 4 0 6M13 2c3 3 3 7 0 10" /></svg>
        <svg width="17" height="12" fill="#eee"><path d="M4 11c-5 0-5-6 0-6 1-6 9-5 9 0 5 0 5 6 1 6z" /></svg>
        DAN
        <Clock>14:23<br />28-10-2020</Clock>
        <svg width="22" height="26" viewBox="0 0 22 26"><path d="M1 3h16v14H9l-4 4v-4H1z" fill="#fff" /><path d="M4 7h9M4 10h9M4 13h5" stroke="#555" /><circle cx="15" cy="18" r="6" fill="#333" stroke="#999" /><text x="15" y="22" fontSize="10" fill="#fff" textAnchor="middle">8</text></svg>
        <ShowDesktop />
      </Tray>
    </Taskbar>
  </Desktop>
);

export default App;
